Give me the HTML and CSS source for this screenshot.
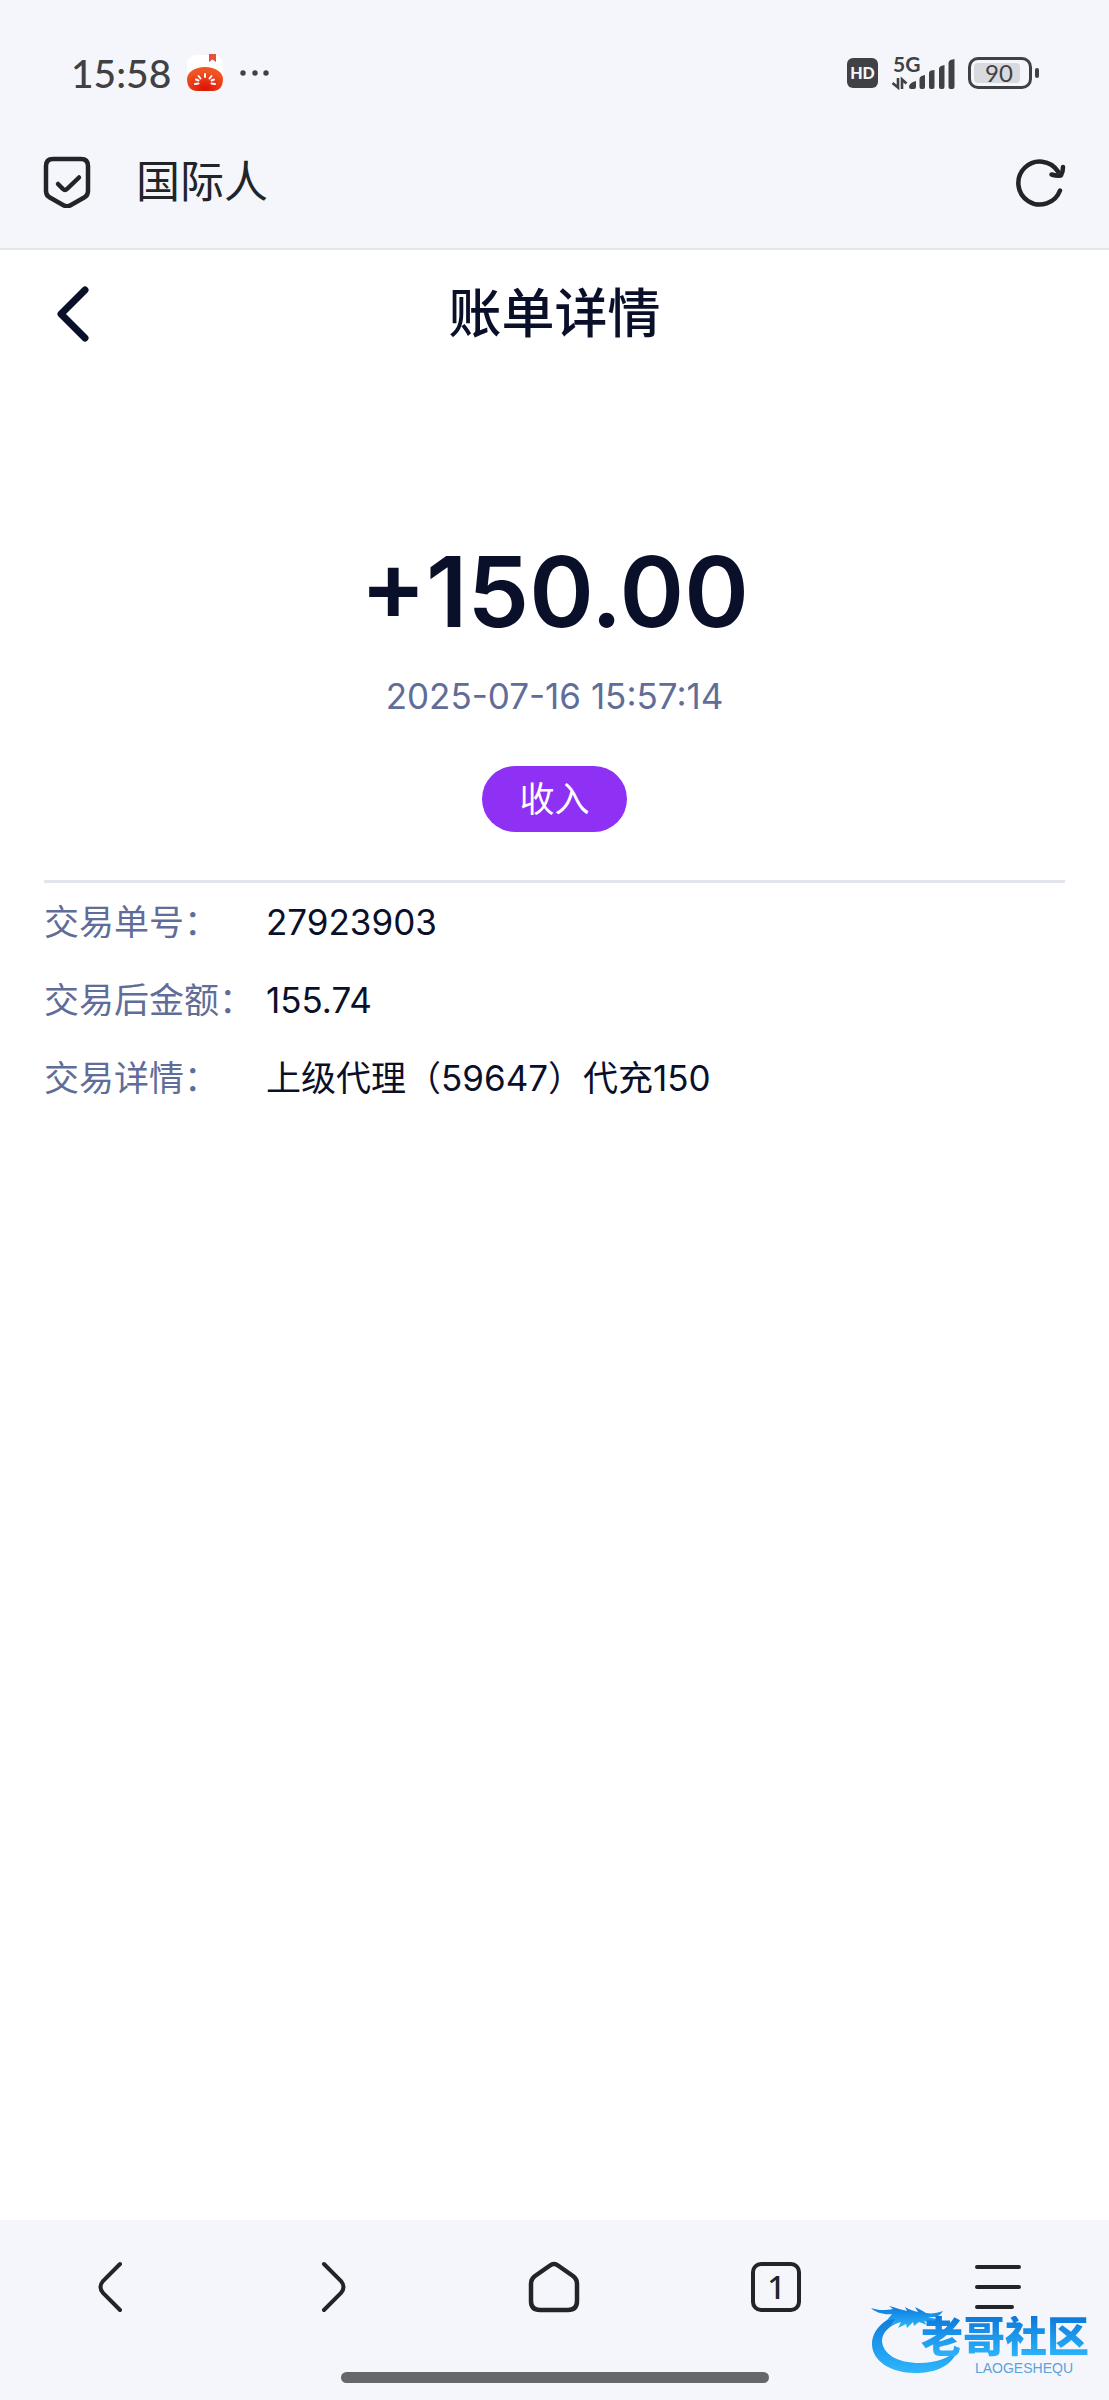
FILE: index.html
```html
<!DOCTYPE html>
<html lang="zh-CN">
<head>
    <meta charset="UTF-8">
    <meta name="viewport" content="width=device-width, initial-scale=1.0">
    <title>账单详情</title>
    <link rel="stylesheet" href="styles.css">
</head>
<body>
    <div class="top">
        <div class="status-bar">
            <span class="time">15:58</span>
            <svg class="app-icon" width="38" height="38" viewBox="0 0 38 38">
                <defs>
                    <radialGradient id="tomato" cx="0.5" cy="0.9" r="0.7">
                        <stop offset="0" stop-color="#dc1207"/>
                        <stop offset="1" stop-color="#ef5524"/>
                    </radialGradient>
                </defs>
                <rect x="1" y="1" width="36" height="36" rx="9" fill="#fff"/>
                <path d="M23 0h7v8l-3.500-2.500L23 8z" fill="#e8503a"/>
                <path d="M1 25C1 18 9 13 19 13s18 5 18 12c0 8-4 12-10 12H11C5 37 1 33 1 25z" fill="url(#tomato)"/>
                <path d="M19 20v3M12.500 22l2 2.500M25.500 22l-2 2.500M9 30l3.500-.5M29 30l-3.500-.5M10 25.500l2.500 1M28 25.500l-2.500 1" fill="none" stroke="#fff" stroke-width="2" stroke-linecap="round"/>
            </svg>
            <svg class="dots" width="30" height="8" viewBox="0 0 30 8" fill="#3f4145">
                <circle cx="3" cy="4" r="2.700"/><circle cx="15" cy="4" r="2.700"/><circle cx="26" cy="4" r="2.700"/>
            </svg>
            <div class="indicators">
                <span class="hd">HD</span>
                <div class="network">
                    <svg width="64" height="34" viewBox="0 0 64 34" fill="#3f4145">
                        <path d="M63.500 3v28q0 2-2 2h-2q-2 0-2-2V7q0-2 2-3zM53.500 9v22q0 2-2 2h-1.500q-2 0-2-2V13q0-2 2-3zM43.500 14v17q0 2-2 2h-1.500q-2 0-2-2V17q0-2 2-2.500zM34 19v12q0 2-2 2h-1.500q-2 0-2-2v-8q0-2 2-3zM25 25v6q0 2-2 2h-3q-2 0-2-2 0-3 4-5z"/>
                        <path d="M1.500 27l5.500 4.500V22M11 33v-9.500l4.500 4" fill="none" stroke="#3f4145" stroke-width="2.600"/>
                    </svg>
                    <span class="network-type">5G</span>
                </div>
                <div class="battery"><span>90</span></div>
            </div>
        </div>
        <div class="address-bar">
            <svg width="48" height="52" viewBox="0 0 48 52" fill="none" stroke="#222428" stroke-width="4.500" stroke-linecap="round" stroke-linejoin="round">
                <path d="M10 3h28q7 0 7 7v25q0 4-3 6L28 49q-4 2.500-8 0L6 41q-3-2-3-6V10q0-7 7-7z"/>
                <path d="M15 28l5 5q2 2 4 0l12-11.500"/>
            </svg>
            <span class="site-name">国际人</span>
            <button class="icon-button" aria-label="刷新">
                <svg width="52" height="52" viewBox="0 0 52 52" fill="none" stroke="#222428" stroke-width="4.500" stroke-linecap="round" stroke-linejoin="round">
                    <path d="M46 34.500A21.500 21.500 0 1 1 44 15.500"/>
                    <path d="M37.500 18.500q5 1.500 9.500 1 2-3.500 2-8.500"/>
                </svg>
            </button>
        </div>
    </div>

    <main class="page">
        <header class="page-header">
            <button class="icon-button" aria-label="返回">
                <svg width="34" height="56" viewBox="0 0 34 56" fill="none" stroke="#0a1029" stroke-width="7" stroke-linecap="round" stroke-linejoin="round">
                    <path d="M28 4L4 28l24 24"/>
                </svg>
            </button>
            <h1>账单详情</h1>
        </header>

        <section class="summary">
            <div class="amount">+150.00</div>
            <div class="date">2025-07-16 15:57:14</div>
            <span class="tag">收入</span>
        </section>

        <dl class="details">
            <dt>交易单号：</dt>
            <dd>27923903</dd>
            <dt>交易后金额：</dt>
            <dd>155.74</dd>
            <dt>交易详情：</dt>
            <dd>上级代理（59647）代充150</dd>
        </dl>
    </main>

    <footer class="bottom">
        <nav class="toolbar">
            <button class="icon-button" aria-label="后退">
                <svg width="52" height="52" viewBox="0 0 52 52" fill="none" stroke="#222428" stroke-width="4" stroke-linecap="round">
                    <path d="M35 3L18 20q-5 6 0 12l17 17"/>
                </svg>
            </button>
            <button class="icon-button" aria-label="前进">
                <svg width="52" height="52" viewBox="0 0 52 52" fill="none" stroke="#222428" stroke-width="4" stroke-linecap="round">
                    <path d="M17 3l17 17q5 6 0 12L17 49"/>
                </svg>
            </button>
            <button class="icon-button" aria-label="主页">
                <svg width="52" height="52" viewBox="0 0 52 52" fill="none" stroke="#222428" stroke-width="4.500" stroke-linejoin="round">
                    <path d="M22 4.500q4-3 8 0L45 15q4 3 4 8v17q0 9-9 9H12q-9 0-9-9V23q0-5 4-8z"/>
                </svg>
            </button>
            <button class="tabs-button">1</button>
            <button class="icon-button" aria-label="菜单">
                <svg width="52" height="52" viewBox="0 0 52 52" fill="none" stroke="#222428" stroke-width="4" stroke-linecap="round">
                    <path d="M5 6h42M5 26h42M5 46h35"/>
                </svg>
            </button>
        </nav>
        <div class="home-indicator"></div>
        <div class="watermark">
            <svg width="90" height="72" viewBox="0 0 90 72">
                <defs>
                    <linearGradient id="dragon" x1="0" y1="0" x2="0" y2="1">
                        <stop offset="0" stop-color="#0b78dc"/>
                        <stop offset="1" stop-color="#2fb6fb"/>
                    </linearGradient>
                </defs>
                <g fill="url(#dragon)">
                    <path d="M30 13C12 18 1 30 1 43c0 17 19 29 43 29 22 0 38-8 43-24-8 9-23 14-38 14-23 0-37-9-38-22 0-9 8-17 24-21z"/>
                    <path d="M0 7c6 2 13 3 22 1l-4-3c8 2 13 4 18 5l-2-4c5 3 9 4 13 5l-3-5c4 2 8 4 11 6 6 1 11 0 17-2-2 3-4 5-7 6h-8c4 1 8 2 12 2-2 3-5 4-9 4l-7-2 3 4-8-3-5 4-1-4-6 6-1-4-8 4 3-6-10 3 4-6-8 1 5-6C14 14 5 12 0 7z"/>
                </g>
            </svg>
            <span class="watermark-name">老哥社区</span>
            <span class="watermark-latin">LAOGESHEQU</span>
        </div>
    </footer>
</body>
</html>
```
FILE: styles.css
```css
* {
    box-sizing: border-box;
}
body {
    font-family: Inter, "Noto Sans CJK SC", sans-serif;
    background-color: #fff;
    color: #0a1029;
    margin: 0;
    min-height: 100vh;
    display: flex;
    flex-direction: column;
}
svg {
    display: block;
}
button {
    background: none;
    border: 0;
    padding: 0;
    color: inherit;
    font: inherit;
    cursor: pointer;
}

/* browser top */
.top {
    background-color: #f4f6fb;
    border-bottom: 2px solid #e4e6e8;
}
.status-bar {
    display: flex;
    align-items: center;
    height: 116px;
    padding: 30px 77px 0 71px;
    color: #3f4145;
}
.time {
    font-family: Lato, sans-serif;
    font-size: 39px;
    font-weight: 500;
    line-height: 40px;
}
.app-icon {
    margin-left: 15px;
}
.dots {
    margin-left: 16px;
}
.indicators {
    display: flex;
    align-items: center;
    gap: 13px;
    margin-left: auto;
}
.hd {
    width: 31px;
    height: 30px;
    border-radius: 6px;
    background: #3f4145;
    color: #f4f6fb;
    font-family: Lato, sans-serif;
    font-size: 16px;
    font-weight: 900;
    line-height: 30px;
    text-align: center;
}
.network {
    position: relative;
}
.network-type {
    position: absolute;
    left: 2px;
    top: -3px;
    font-family: Lato, sans-serif;
    font-size: 21px;
    font-weight: 700;
    line-height: 21px;
}
.battery {
    position: relative;
    width: 64px;
    height: 32px;
    border: 3px solid #3f4145;
    border-radius: 10px;
    padding: 3px;
}
.battery span {
    display: block;
    width: 46px;
    padding-left: 4px;
    border-radius: 4px;
    background: #d9dae0;
    font-family: Lato, sans-serif;
    font-size: 24px;
    line-height: 20px;
    text-align: center;
}
.battery::after {
    content: "";
    position: absolute;
    right: -10px;
    top: 8px;
    width: 4px;
    height: 10px;
    border-radius: 2px;
    background: #3f4145;
}
.address-bar {
    display: flex;
    align-items: center;
    height: 132px;
    padding: 0 43px;
    color: #222428;
}
.site-name {
    margin-left: 45px;
    font-size: 44px;
    line-height: 60px;
}
.address-bar .icon-button {
    margin-left: auto;
}

/* bill page */
.page {
    flex: 1;
    padding: 0 44px;
}
.page-header {
    display: grid;
    grid-template-columns: 60px 1fr 60px;
    align-items: center;
    height: 128px;
}
.page-header .icon-button {
    justify-self: center;
}
h1 {
    margin: 0;
    font-size: 53px;
    font-weight: 500;
    line-height: 72px;
    text-align: center;
}
.summary {
    display: flex;
    flex-direction: column;
    align-items: center;
    padding: 154px 0 48px;
    border-bottom: 3px solid #e2e4ee;
}
.amount {
    font-size: 98px;
    font-weight: 600;
    line-height: 120px;
}
.date {
    margin-top: 24px;
    color: #5f6d98;
    font-size: 35px;
    line-height: 40px;
}
.tag {
    margin-top: 50px;
    padding: 0 37px;
    border-radius: 33px;
    background: #8f30f5;
    color: #fff;
    font-size: 35px;
    line-height: 66px;
}
.details {
    display: grid;
    grid-template-columns: 222px 1fr;
    margin: 0;
    font-size: 35px;
    line-height: 78px;
}
.details dt {
    color: #5f6d98;
}
.details dd {
    margin: 0;
}

/* browser bottom */
.bottom {
    position: relative;
    height: 180px;
    background: #f4f6fb;
}
.toolbar {
    display: grid;
    grid-template-columns: repeat(5, 1fr);
    justify-items: center;
    align-items: center;
    height: 134px;
}
.tabs-button {
    width: 50px;
    height: 50px;
    border: 4px solid #222428;
    border-radius: 10px;
    color: #222428;
    font-family: "Noto Sans", sans-serif;
    font-size: 32px;
    font-weight: 500;
    line-height: 40px;
}
.home-indicator {
    width: 428px;
    height: 11px;
    margin: 18px auto 0;
    border-radius: 6px;
    background: #66676a;
}

/* community logo over the toolbar */
.watermark {
    position: absolute;
    right: 18px;
    bottom: 27px;
    width: 220px;
    height: 72px;
}
.watermark-name {
    position: absolute;
    right: 2px;
    top: 15px;
    background: linear-gradient(#0b78dc, #2fb6fb);
    background-clip: text;
    -webkit-background-clip: text;
    color: transparent;
    font-size: 42px;
    font-weight: 900;
    line-height: 42px;
}
.watermark-latin {
    position: absolute;
    right: 18px;
    top: 60px;
    color: #5aa3dc;
    font-family: "Liberation Sans", sans-serif;
    font-size: 14px;
    line-height: 14px;
}
```
